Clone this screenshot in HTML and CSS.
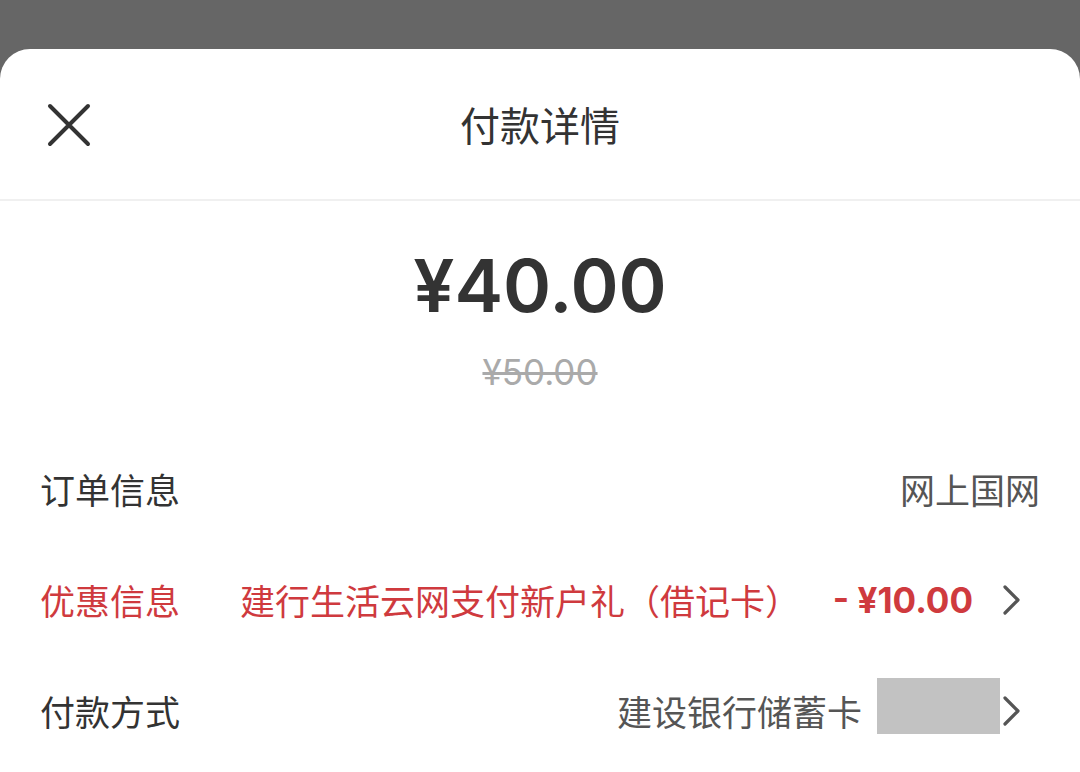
FILE: index.html
```html
<!DOCTYPE html>
<html lang="zh-CN">
<head>
    <meta charset="UTF-8">
    <meta name="viewport" content="width=device-width, initial-scale=1.0">
    <title>付款详情</title>
    <link rel="stylesheet" href="styles.css">
</head>
<body>
    <div class="sheet">
        <header class="top">
            <svg class="close" width="44" height="44" viewBox="0 0 44 44">
                <path d="M3 3 L41 41 M41 3 L3 41" stroke="#333" stroke-width="4" stroke-linecap="round" fill="none"/>
            </svg>
            <h1>付款详情</h1>
        </header>

        <section class="amount">
            <div class="now">¥40.00</div>
            <div class="old">¥50.00</div>
        </section>

        <div class="row">
            <span class="label">订单信息</span>
            <span class="value">网上国网</span>
        </div>
        <div class="row promo">
            <span class="label">优惠信息</span>
            <span class="desc">建行生活云网支付新户礼（借记卡）</span>
            <span class="off">- ¥10.00</span>
            <svg class="arrow" width="36" height="30" viewBox="0 0 36 30">
                <path d="M6 2 L19 15 L6 28" stroke="#555" stroke-width="3.2" stroke-linecap="round" stroke-linejoin="round" fill="none"/>
            </svg>
        </div>
        <div class="row">
            <span class="label">付款方式</span>
            <span class="value">建设银行储蓄卡</span>
            <span class="mask"></span>
            <svg class="arrow tight" width="36" height="30" viewBox="0 0 36 30">
                <path d="M6 2 L19 15 L6 28" stroke="#555" stroke-width="3.2" stroke-linecap="round" stroke-linejoin="round" fill="none"/>
            </svg>
        </div>
    </div>
</body>
</html>
```

FILE: styles.css
```css
body {
    margin: 0;
    padding: 0;
    background-color: #666666;
    font-family: "Noto Sans CJK SC", "Noto Sans", sans-serif;
    color: #333;
    overflow: hidden;
}

.sheet {
    margin-top: 49px;
    background: white;
    border-radius: 30px 30px 0 0;
    height: 723px;
}

.top {
    position: relative;
    height: 150px;
    display: flex;
    align-items: center;
    justify-content: center;
    border-bottom: 2px solid #f0f0f0;
}

.top h1 {
    margin: 0;
    font-size: 40px;
    font-weight: normal;
    color: #333;
}

.close {
    position: absolute;
    left: 47px;
    top: 54px;
}

.amount {
    height: 232px;
    display: flex;
    flex-direction: column;
    align-items: center;
}

.now {
    font-family: Inter, "Noto Sans", sans-serif;
    font-size: 73px;
    font-weight: 600;
    color: #333;
    margin-top: 35px;
    line-height: 100px;
}

.old {
    font-family: Inter, "Noto Sans", sans-serif;
    font-size: 35px;
    color: #aaa;
    text-decoration: line-through;
    line-height: 40px;
    margin-top: 16px;
}

.row {
    height: 111px;
    display: flex;
    align-items: center;
    padding: 0 40px;
    font-size: 35px;
}

.label {
    width: 200px;
    color: #333;
}

.value {
    margin-left: auto;
    color: #555;
}

.promo .label,
.promo .desc {
    color: #cf3a3e;
}

.off {
    margin-left: auto;
    font-family: Inter, "Noto Sans", sans-serif;
    font-weight: 700;
    color: #cf3a3e;
}

.arrow {
    margin-left: 26px;
    margin-right: 5px;
}

.arrow.tight {
    margin-left: -1px;
}

.mask {
    width: 123px;
    height: 56px;
    background: #c2c2c2;
    margin-left: 15px;
    margin-bottom: 10px;
}
```
